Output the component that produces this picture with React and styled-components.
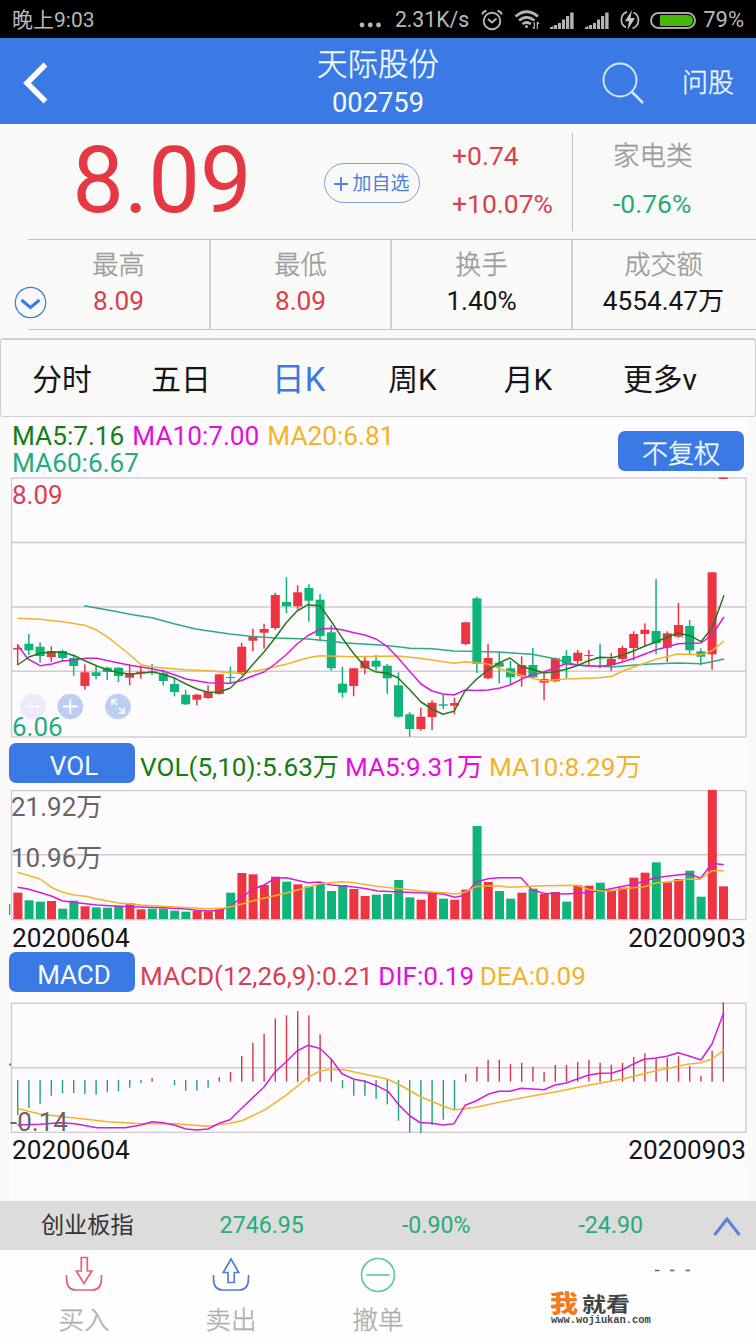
import React from "react";
import styled, { createGlobalStyle } from "styled-components";

const C = {
  blue: "#3b79e5",
  red: "#e53845",
  textRed: "#d8404f",
  green: "#0fb478",
  textGreen: "#26ac78",
  magenta: "#e010d8",
  lineMagenta: "#d21fd6",
  yellow: "#f0b429",
  darkGreen: "#118011",
  grey: "#9b9b9b",
  rule: "#c4c4c4",
};

const Global = createGlobalStyle`
  * { box-sizing: border-box; }
  body { margin: 0; background: #f9f9f7; font-family: Roboto, "Noto Sans CJK SC", sans-serif; }
  svg { display: block; }
`;

const Screen = styled.div`
  width: 756px;
  height: 1344px;
  overflow: hidden;
  display: flex;
  flex-direction: column;
  background: #f9f9f7;
`;

const Text = styled.span`
  display: block;
  white-space: pre;
  font-size: ${(p) => p.$size}px;
  line-height: ${(p) => p.$line || p.$size * 1.2}px;
  color: ${(p) => p.$color || "#151515"};
  font-weight: ${(p) => p.$weight || 400};
  -webkit-text-stroke: ${(p) => (p.$weight === 300 ? 0.4 : 0)}px currentColor;
`;

/* ---------- status bar ---------- */
const StatusBar = styled.div`
  height: 38px;
  flex: none;
  background: #000;
  display: flex;
  align-items: center;
  padding: 2px 12px 0 12px;
`;
const StatusIcons = styled.div`
  margin-left: auto;
  display: flex;
  align-items: center;
`;
const Glyph = styled.svg`
  margin-left: ${(p) => p.$gap || 0}px;
`;
const Battery = styled.div`
  width: 46px;
  height: 17px;
  margin: 0 7px 0 10px;
  border: 2px solid #a9a9a9;
  border-radius: 9px;
  padding: 1px 1px 1px 8px;
`;
const Charge = styled.div`
  height: 100%;
  background: #46b80a;
  border-radius: 0 6px 6px 0;
`;

/* ---------- header ---------- */
const Header = styled.header`
  height: 86px;
  flex: none;
  background: ${C.blue};
  display: grid;
  grid-template-columns: 200px 356px 200px;
  align-items: center;
  padding-top: 3px;
`;
const BackButton = styled.div`
  padding: 0 0 0 22px;
`;
const Titles = styled.div`
  display: flex;
  flex-direction: column;
  align-items: center;
`;
const HeaderActions = styled.div`
  display: flex;
  align-items: center;
  justify-content: flex-end;
  gap: 38px;
  padding-right: 22px;
`;

/* ---------- quote ---------- */
const Quote = styled.section`
  height: 115px;
  flex: none;
  display: grid;
  grid-template-columns: 324px 128px 120px 184px;
`;
const Price = styled.div`
  display: flex;
  align-items: center;
  justify-content: center;
  padding: 0 0 2px 0;
`;
const AddButton = styled.div`
  width: 96px;
  height: 40px;
  margin-top: 39px;
  padding-top: 1px;
  border: 1.5px solid #7ba0e6;
  border-radius: 20px;
  display: flex;
  align-items: center;
  justify-content: center;
  gap: 4px;
`;
const Change = styled.div`
  padding-top: 16px;
  display: flex;
  flex-direction: column;
  gap: 16px;
`;
const Sector = styled(Change)`
  margin: 9px 0 8px;
  height: 98px;
  padding: 7px 0 0 40px;
  border-left: 1px solid #bfbfbf;
`;

const Stats = styled.section`
  position: relative;
  height: 91px;
  flex: none;
  margin: 0 0 8px 28px;
  border-top: 1px solid ${C.rule};
  border-bottom: 1px solid ${C.rule};
  display: grid;
  grid-template-columns: 183px 181px 181px 181px;
`;
const Stat = styled.div`
  padding-top: 7px;
  text-align: center;
  border-right: ${(p) => (p.$last ? "none" : "2px solid #d0d0d0")};
`;
const Expander = styled.svg`
  position: absolute;
  left: -14px;
  top: 46px;
`;

/* ---------- tabs ---------- */
const Tabs = styled.nav`
  height: 79px;
  flex: none;
  border: 1px solid #cfcfcf;
  border-top-width: 2px;
  border-radius: 3px;
  display: grid;
  grid-template-columns: 122px 116px 119px 109px 122px 142px;
  align-items: center;
  text-align: center;
  padding-top: 3px;
`;

/* ---------- charts ---------- */
const Charts = styled.main`
  height: 784px;
  flex: none;
  margin: 0 8px 0 9px;
  background: #fefbff;
  display: flex;
  flex-direction: column;
`;
const MaLegend = styled.div`
  height: 60px;
  display: flex;
  justify-content: space-between;
  padding: 6px 4px 0 3px;
`;
const LegendLine = styled.div`
  display: flex;
  gap: ${(p) => p.$gap || 0}px;
  padding-top: ${(p) => p.$shift || 0}px;
`;
const Pill = styled.div`
  width: 126px;
  height: 40px;
  flex: none;
  margin-top: ${(p) => p.$top || 0}px;
  padding: 7px 0 0 ${(p) => p.$shift || 0}px;
  border-radius: 7px;
  background: ${C.blue};
  display: flex;
  align-items: center;
  justify-content: center;
`;
const IndicatorRow = styled.div`
  height: 40px;
  margin-bottom: ${(p) => p.$bottom}px;
  margin-top: ${(p) => p.$top || 0}px;
  display: flex;
  align-items: center;
  gap: 5px;
`;
const Plot = styled.div`
  position: relative;
  height: ${(p) => p.$height}px;
  flex: none;
`;
const PlotLabel = styled(Text)`
  position: absolute;
  left: ${(p) => p.$left}px;
  top: ${(p) => p.$top}px;
`;
const Dates = styled.div`
  height: 31px;
  display: flex;
  justify-content: space-between;
  align-items: center;
  padding: 5px 2px 0 3px;
`;

/* ---------- footer ---------- */
const IndexBar = styled.div`
  height: 49px;
  flex: none;
  background: #dcdcdc;
  display: grid;
  grid-template-columns: repeat(4, 174.5px) 58px;
  align-items: center;
  justify-items: center;
`;
const BottomNav = styled.footer`
  position: relative;
  flex: 1;
  background: #fefefe;
  display: grid;
  grid-template-columns: repeat(5, 147px);
  padding-left: 10.5px;
`;
const NavItem = styled.div`
  display: flex;
  flex-direction: column;
  align-items: center;
  padding-top: 5px;
  gap: 10px;
`;
const Watermark = styled.div`
  position: absolute;
  left: 550px;
  top: 42px;
`;
const WatermarkName = styled.div`
  display: flex;
  align-items: flex-end;
  gap: 4px;
  height: 25px;
  transform: scaleY(0.84);
`;
const WatermarkUrl = styled.div`
  font: bold 10.4px/10px "Liberation Mono", monospace;
  color: #444;
  padding-left: 1px;
  margin-top: -2px;
`;

/* ---------- data ---------- */
const X0 = 17.6;
const STEP = 11.2;
const xAt = (i) => X0 + STEP * i;

// colour, high, body top, body bottom, low
const candles = [
  ["r", 644, 648, 649.5, 665], ["g", 634, 643.7, 650.3, 655], ["g", 642.3, 646.7, 656, 662.7],
  ["r", 646.3, 651, 657, 662], ["g", 649.7, 651, 658, 661.3], ["g", 654.3, 658, 666, 675.7],
  ["r", 664.3, 672.3, 686, 689.7], ["g", 665.7, 672.3, 676, 679.3], ["g", 666.7, 667.7, 672, 680],
  ["g", 667.3, 667.7, 676, 682], ["r", 664.3, 673.7, 677.7, 685.3], ["r", 666, 671.7, 673, 678.7],
  ["g", 664, 671.3, 672.5, 675], ["g", 670, 673.3, 681, 685.3], ["g", 677.3, 684, 692, 696.3],
  ["g", 690, 694.7, 704.3, 705], ["r", 694, 694.7, 699.7, 705.3], ["r", 685.3, 692, 698, 698.7],
  ["r", 674, 674.3, 694, 694.7], ["g", 666.7, 677, 678, 683], ["r", 642.7, 646.7, 674, 675.3],
  ["r", 628.7, 636, 640.7, 651.3], ["r", 623.7, 629, 632.7, 648.7], ["r", 592.7, 595, 628, 629.7],
  ["g", 577.3, 602, 606.3, 613.3], ["r", 585.3, 592.3, 606.3, 609.3], ["g", 584.3, 588, 600.7, 621.7],
  ["g", 594, 599.7, 636, 641.3], ["g", 625, 632.3, 668.3, 670.7], ["g", 666.7, 683.7, 692.7, 697.7],
  ["r", 668, 668.3, 686, 696.3], ["r", 656.7, 660.7, 668.3, 674.3], ["g", 655, 660.7, 666.7, 670.7],
  ["g", 664, 665.7, 678.3, 694], ["g", 672.3, 685.3, 716.7, 717.7], ["g", 712, 714.3, 729, 736.7],
  ["r", 707.7, 716.7, 729, 730.7], ["r", 700.3, 702.7, 717, 730], ["g", 694, 704.3, 705.7, 709],
  ["r", 697.7, 703, 705.7, 714.3], ["r", 621.7, 622.3, 644, 645.3], ["g", 596.7, 598.3, 664, 673],
  ["r", 644, 658, 678.3, 679.3], ["g", 652, 662.7, 666.7, 683.3], ["g", 660.7, 668.3, 677.3, 684],
  ["r", 656.3, 665, 676.3, 686.7], ["g", 648, 665, 677.3, 678], ["r", 673.3, 679, 682.7, 700.3],
  ["r", 657.5, 658.3, 681.3, 682.3], ["g", 650, 656, 663.7, 678], ["r", 650, 652.7, 661, 666],
  ["r", 650, 655, 656, 666], ["g", 643.7, 657, 658.3, 668.3], ["r", 653, 659, 665, 671],
  ["r", 645.7, 648, 659, 660.7], ["r", 631.3, 634, 648, 660.3], ["r", 623.3, 629.7, 634, 646.7],
  ["g", 579, 631, 643.3, 654.3], ["r", 631.3, 633.3, 647.7, 662], ["r", 603, 625, 636.7, 637.7],
  ["g", 620, 626, 650.3, 654.3], ["g", 648.3, 651.3, 656.7, 665.3], ["r", 572.3, 572.3, 654.3, 669.7],
  ["r", 477.5, 477.5, 479, 479],
];

const klineLines = {
  ma60: "84,605.7 108,610 130,614.3 152,617.7 175,624 197,629.3 230,634 250,636.3 275,638 308,639 330,641 342,642.7 380,645 398,646.7 410,648.3 432,648.7 454,651 499,652 532,654.3 555,658.7 566,662 577,665 612,667 645,664.3 678,663 701,663.7 712,661.7 724,659",
  ma20: "17.5,618.3 40,619.3 62,621.7 85,625.3 97,630.3 108,637.3 119,646 130,655 141,664.7 152,667 186,669.7 208,670.7 230,672.7 242,673 250,672 264,669.3 286,664.3 308,657.7 320,655.7 354,656.7 398,656 420,658.3 454,663.3 465,661.7 488,664 500,668.7 512,672.7 532,678.3 544,680.7 566,679 600,677.7 612,676.3 623,671 634,667 645,663 656,659.3 678,654 701,654.7 712,650.7 724,641",
  ma5: "17.5,665 28.8,657 40,653.3 52,652 63,652.3 75,656 85,660.7 97,666 108,670 119,672.7 130,674 141,673.3 152,672 163,674 175,678.3 186,684 197,689 208,692.3 219,692 230,688.3 242,677 250,667.7 264,652 275,638 286,623 297,611 308,604.7 320,606 331,621 342,637.7 354,654 365,666.7 375,671.7 387,673.3 398,677.7 410,690 421,702 432,709 443,714.3 454,711.3 465,691 476,679.7 488,670 499,663 510,658 521,666.7 532,669.3 544,673 555,671.7 566,669.3 577,665.7 588,661 600,657.3 612,657.7 623,655 634,650.7 645,646 656,642 667,637.3 678,633 690,635.7 701,641.7 712,628 724,595.3",
  ma10: "17.5,645 28,659 40,665.7 52,664 62,661 75,660 85,658.3 97,658.3 108,660.7 119,663 130,665.3 152,668.7 163,671 175,675 186,679 208,682.7 230,683.3 241,680.7 250,677 264,672 275,664 286,655 297,644 308,635.5 320,629.3 331,628.3 342,629.7 354,632.7 365,635 376,639 387,646.3 398,657.7 410,671.7 421,684 432,691 443,694 454,695 465,690 476,690.5 488,690 500,688 510,685 521,679.3 532,675 544,672 555,667.7 566,663.7 577,665 588,666 600,666.3 612,665 623,661.7 634,658.3 645,654 656,649.7 667,647 678,643.7 690,643.3 701,643 712,635 724,617",
};

// bar height in thirds of a pixel above the base line
const volumeColors = "rggrggrgggrrggggrrrgrrrrgrggggrrgggg" + "rrgrrgrggrgrrgrrgrrrrgrrggrr";
const volumeHeights = [
  79, 56, 52, 54, 31, 55, 38, 35, 34, 40, 47, 29, 31, 31, 25, 22, 24, 23, 29, 79, 138, 134, 102, 127, 112, 104, 98, 105,
  84, 102, 90, 69, 73, 75, 117, 65, 58, 79, 61, 58, 88, 279, 111, 84, 61, 79, 91, 75, 81, 52, 101, 100, 109, 87, 94,
  124, 139, 170, 110, 120, 145, 67, 387, 98,
];
const volumeLines = {
  ma5: "17.5,887.3 28,889 40,892.5 52,896.3 62,900.7 75,902.5 97,905 119,906.3 141,907 163,907.7 186,909 197,910.3 208,911 219,910.5 230,906.7 242,897 253,889.3 264,885 275,878.3 286,877.7 297,880.3 308,882.7 320,882 331,885 342,885.7 354,887 365,888.5 378,891 400,892 432,893.3 443,894 455,897.3 465,895.3 476,882 488,878.7 499,877.7 521,877.7 532,890 544,893.3 566,894 588,892.5 608,889.3 618,887.3 634.7,884 644.7,881 655.7,877.7 667,876.3 689,873.7 700.7,878.3 712,863.3 723.7,864.7",
  ma10: "17.5,872.3 40,879 52,887.7 62,892 75,895.3 86,896.3 97,899 119,903 141,905 175,907 208,908.7 225,908 242,904 253,900.7 264,898.3 286,893 308,887.3 320,883.7 331,882.7 342,881.7 354,882.7 378,886.5 400,888.7 421,891 443,892.7 456,894 465,892.3 476,886.7 488,885.7 499,886 510,887.3 532,886.3 544,885.7 577,885.3 588,889.3 600,891 612,890.7 623,888.7 644,886.7 656,883 667,882 689,879 700,879.3 712,870.7 723.7,870.7",
};

// positive values rise above the zero line, negative fall below it
const macdBars = [
  -105, -84, -71, -47, -40, -39, -42, -44, -37, -34, -23, -10, 11, 0, -16, -33, -32, -23, 14, 29, 77, 117, 144, 190,
  199, 212, 199, 142, 70, -25, -47, -47, -57, -73, -122, -158, -159, -135, -119, -90, 23, 45, 66, 66, 53, 57, 45, 29,
  50, 50, 59, 66, 57, 51, 57, 74, 85, 69, 71, 76, 47, 18, 93, 238,
];
const macdLines = {
  dea: "17.5,1108.5 40,1114 70,1117.5 108,1121.7 141,1123.7 175,1123.7 208,1126.3 230,1123.3 242,1120.7 264,1110.3 286,1095.3 308,1077.3 320,1071 331,1069.3 345,1070 378,1077 388,1079.3 400,1085 421,1097 443,1106 454,1110 476,1107.3 499,1102.3 532,1096 555,1092 588,1085.3 623,1079 656,1070.7 689,1064 701,1062.7 712,1059 724,1050",
  dif: "17.5,1125 40,1124.3 60,1122.7 75,1123.7 97,1127.7 125,1127.7 141,1125 152,1121.7 163,1122.7 175,1125.3 186,1129 197,1130 208,1129 219,1123.3 230,1119.7 242,1108 264,1087 275,1072 286,1062 297,1051 308,1045.3 320,1048.5 331,1059 342,1073.7 354,1079.3 365,1081.3 378,1086.3 388,1091.3 399,1105 410,1116 420,1122.5 432,1123.3 443,1125 454,1123.7 465,1105.3 476,1101 488,1094.3 499,1091.3 510,1091.3 521,1088.3 544,1089.7 555,1085 566,1083 588,1075.3 600,1073.3 612,1073 622,1070 634,1063.7 644,1059.3 656,1058 667,1056.3 678,1052.7 689,1056 701,1060 712,1044 724,1012",
};

const tone = (c) => (c === "r" ? "#ed3542" : C.green);

const Line = ({ points, color }) => (
  <polyline points={points} fill="none" stroke={color} strokeWidth="1.5" strokeLinejoin="round" />
);

const Frame = ({ top, bottom, grid }) => (
  <g stroke="#cfcbd0" strokeWidth="1.4" fill="none">
    <rect x="11.5" y={top} width="734.5" height={bottom - top} />
    {grid.map((y) => (
      <line key={y} x1="11.5" x2="746" y1={y} y2={y} />
    ))}
  </g>
);

function KLine() {
  return (
    <svg width="739" height="261" viewBox="9 477 739 261">
      <Frame top={478} bottom={737} grid={[542.5, 607, 671.3]} />
      {candles.map(([c, high, top, bottom, low], i) => (
        <g key={i} fill={tone(c)}>
          <rect x={xAt(i) - 0.7} y={high} width="1.5" height={low - high} />
          <rect x={xAt(i) - 4.4} y={top} width="9" height={bottom - top} />
        </g>
      ))}
      <Line points={klineLines.ma60} color="#2fa982" />
      <Line points={klineLines.ma20} color={C.yellow} />
      <Line points={klineLines.ma10} color={C.lineMagenta} />
      <Line points={klineLines.ma5} color="#257a1c" />
      <g fill="none" stroke="#fff" strokeWidth="1.8">
        <circle cx="33" cy="706.5" r="12.8" fill="#eeeafb" stroke="none" />
        <path d="M27 706.5h12" />
        <circle cx="70.3" cy="706.5" r="12.8" fill="#bccff3" stroke="none" />
        <path d="M63 706.5h14.6M70.3 699.2v14.6" />
        <circle cx="118" cy="706.5" r="12.8" fill="#bccff3" stroke="none" />
        <path d="M112 705v-5h5M112 700l5 5M124 708v5h-5M124 713l-5-5" strokeWidth="1.6" />
      </g>
    </svg>
  );
}

function Volume() {
  return (
    <svg width="739" height="131" viewBox="9 790 739 131">
      <Frame top={790.5} bottom={919.5} grid={[854.7]} />
      {volumeHeights.map((h, i) => (
        <rect key={i} x={xAt(i) - 4.2} y={919 - h / 3} width="9" height={h / 3} fill={tone(volumeColors[i])} />
      ))}
      <Line points={volumeLines.ma5} color={C.lineMagenta} />
      <Line points={volumeLines.ma10} color={C.yellow} />
      <rect x="9" y="904" width="1.2" height="11" fill="#777" />
    </svg>
  );
}

function Macd() {
  return (
    <svg width="739" height="131" viewBox="9 1002 739 131">
      <Frame top={1003.3} bottom={1132.4} grid={[1067.7]} />
      {macdBars.map((v, i) => (
        <rect
          key={i}
          x={xAt(i) - 0.6}
          y={v > 0 ? 1081.7 - v / 3 : 1080}
          width="1.4"
          height={Math.abs(v) / 3}
          fill={v > 0 ? "#cf3a45" : "#20a478"}
        />
      ))}
      <Line points={macdLines.dea} color={C.yellow} />
      <Line points={macdLines.dif} color={C.lineMagenta} />
      <rect x="9" y="1063.5" width="2" height="2" fill="#777" />
    </svg>
  );
}

const Signal = ({ gap }) => (
  <Glyph $gap={gap} width="24" height="17" viewBox="0 0 24 17" fill="#b4b4b4">
    <path d="M0 17v-1.5l3.4-1.5v3zM4.1 13h3v4h-3zM8 11h3v6H8zM12 7.5h3v9.5h-3zM16 4h3.2v13H16zM20.2 0.5h3.4V17h-3.4z" />
  </Glyph>
);

const stats = [
  ["最高", "8.09", C.textRed],
  ["最低", "8.09", C.textRed],
  ["换手", "1.40%", "#151515"],
  ["成交额", "4554.47万", "#151515"],
];
const tabs = ["分时", "五日", "日K", "周K", "月K", "更多v"];
const index = [
  ["创业板指", "#333"],
  ["2746.95", C.textGreen],
  ["-0.90%", C.textGreen],
  ["-24.90", C.textGreen],
];
const LEGEND = 26.1;

export default function App() {
  return (
    <Screen>
      <Global />
      <StatusBar>
        <Text $size={21} $line={29} $color="#b8b8b8">晚上9:03</Text>
        <StatusIcons>
          <Glyph width="22" height="15" viewBox="0 0 22 15" fill="#b8b8b8">
            <circle cx="3" cy="12" r="2.4" />
            <circle cx="11.3" cy="12" r="2.4" />
            <circle cx="19.5" cy="12" r="2.4" />
          </Glyph>
          <Glyph width="14" height="1" />
          <Text $size={21.2} $color="#b8b8b8">2.31K/s</Text>
          <Glyph $gap={12} width="22" height="22" viewBox="0 0 22 22" fill="none" stroke="#b4b4b4" strokeWidth="1.9">
            <circle cx="11" cy="12" r="8.3" />
            <path d="M7 10l4 3.5 4.5-4M1.2 5.5Q2 2.5 5.5 1.8M20.8 5.5Q20 2.5 16.5 1.8" />
          </Glyph>
          <Glyph $gap={11} width="27" height="20" viewBox="0 0 27 20" fill="none" stroke="#b4b4b4" strokeWidth="2.7">
            <path d="M1.5 6.5Q12.5-3 24 6.5M5 10.5Q12.5 4 20.5 10.5M8.5 14Q12.5 11 17 14" />
            <circle cx="12.5" cy="16.5" r="1.5" fill="#b4b4b4" stroke="none" />
            <path d="M20.3 12v7M23.3 12v7M18.8 17l1.5 2M23.3 12l1.7 2" strokeWidth="1.2" />
          </Glyph>
          <Signal gap={9} />
          <Signal gap={11} />
          <Glyph $gap={11} width="20" height="20" viewBox="0 0 20 20" fill="none" stroke="#b4b4b4" strokeWidth="1.8">
            <path d="M7 1.8a8.5 8.5 0 0 0-1 15.6M13.5 2.5a8.5 8.5 0 0 1-1 15.8" />
            <path d="M12 0L5 11.3h4L7.5 20l7.5-12h-4.5z" fill="#c4c4c4" stroke="none" />
          </Glyph>
          <Battery>
            <Charge />
          </Battery>
          <Text $size={22} $color="#b8b8b8">79%</Text>
        </StatusIcons>
      </StatusBar>

      <Header>
        <BackButton>
          <svg width="28" height="42" viewBox="0 0 28 42" fill="none" stroke="#fff" strokeWidth="5.5">
            <path d="M23.5 2.5L5 21l18.5 18.5" />
          </svg>
        </BackButton>
        <Titles>
          <Text $size={30.5} $line={42} $color="#f4fcff" $weight={300}>天际股份</Text>
          <Text $size={27.3} $line={35} $color="#f4fcff">002759</Text>
        </Titles>
        <HeaderActions>
          <svg width="42" height="42" viewBox="0 0 42 42" fill="none" stroke="#d5eaff" strokeWidth="1.9">
            <circle cx="18" cy="18" r="16.5" />
            <path d="M29.5 29.5L41 41" strokeWidth="2.5" />
          </svg>
          <Text $size={26} $line={36} $color="#eef8ff" $weight={300}>问股</Text>
        </HeaderActions>
      </Header>

      <Quote>
        <Price>
          <Text $size={92} $line={110} $color={C.red}>8.09</Text>
        </Price>
        <AddButton>
          <svg width="14" height="14" viewBox="0 0 14 14" stroke="#4f80dc" strokeWidth="1.8">
            <path d="M0 7h14M7 0v14" />
          </svg>
          <Text $size={19} $line={26} $color="#4f80dc">加自选</Text>
        </AddButton>
        <Change>
          <Text $size={26.5} $line={32} $color={C.textRed}>+0.74</Text>
          <Text $size={26.5} $line={32} $color={C.textRed}>+10.07%</Text>
        </Change>
        <Sector>
          <Text $size={26.5} $line={32} $color={C.grey} $weight={300}>家电类</Text>
          <Text $size={26.5} $line={32} $color={C.textGreen}>-0.76%</Text>
        </Sector>
      </Quote>

      <Stats>
        {stats.map(([label, value, color], i) => (
          <Stat key={label} $last={i === 3}>
            <Text $size={26.2} $line={36} $color={C.grey} $weight={300}>{label}</Text>
            <Text $size={26.2} $line={36} $color={color}>{value}</Text>
          </Stat>
        ))}
        <Expander width="33" height="33" viewBox="0 0 33 33" fill="none" stroke={C.blue}>
          <circle cx="16.5" cy="16.5" r="15.2" strokeWidth="1.2" />
          <path d="M7.5 14l9 7.5 9-7.5" strokeWidth="3" />
        </Expander>
      </Stats>

      <Tabs>
        {tabs.map((t) => {
          const active = t === "日K";
          return (
            <Text key={t} $size={active ? 33 : 29.8} $line={38} $color={active ? C.blue : "#151515"}>{t}</Text>
          );
        })}
      </Tabs>

      <Charts>
        <MaLegend>
          <div>
            <LegendLine $gap={8}>
              <Text $size={26.2} $line={26.5} $color={C.darkGreen}>MA5:7.16</Text>
              <Text $size={26.2} $line={26.5} $color={C.magenta}>MA10:7.00</Text>
              <Text $size={26.2} $line={26.5} $color={C.yellow}>MA20:6.81</Text>
            </LegendLine>
            <Text $size={26.2} $line={26.5} $color={C.textGreen}>MA60:6.67</Text>
          </div>
          <Pill $top={8}>
            <Text $size={26} $color="#f4fcff" $weight={300}>不复权</Text>
          </Pill>
        </MaLegend>
        <Plot $height={261}>
          <KLine />
          <PlotLabel $size={26} $line={26} $left={3} $top={5} $color={C.textRed}>8.09</PlotLabel>
          <PlotLabel $size={26} $left={3} $top={235} $color={C.textGreen}>6.06</PlotLabel>
        </Plot>
        <IndicatorRow $top={5} $bottom={7}>
          <Pill $shift={4}>
            <Text $size={26} $color="#f4fcff">VOL</Text>
          </Pill>
          <LegendLine $gap={6} $shift={10}>
            <Text $size={LEGEND} $color={C.darkGreen}>VOL(5,10):5.63万</Text>
            <Text $size={LEGEND} $color={C.magenta}>MA5:9.31万</Text>
            <Text $size={LEGEND} $color={C.yellow}>MA10:8.29万</Text>
          </LegendLine>
        </IndicatorRow>
        <Plot $height={131}>
          <Volume />
          <PlotLabel $size={26} $left={2} $top={2} $color="#666">21.92万</PlotLabel>
          <PlotLabel $size={26} $left={2} $top={53} $color="#666">10.96万</PlotLabel>
        </Plot>
        <Dates>
          <Text $size={26.2}>20200604</Text>
          <Text $size={26.2}>20200903</Text>
        </Dates>
        <IndicatorRow $bottom={10}>
          <Pill $shift={4}>
            <Text $size={26} $color="#f4fcff">MACD</Text>
          </Pill>
          <LegendLine $gap={5.5} $shift={10}>
            <Text $size={LEGEND} $color={C.textRed}>MACD(12,26,9):0.21</Text>
            <Text $size={LEGEND} $color={C.magenta}>DIF:0.19</Text>
            <Text $size={LEGEND} $color={C.yellow}>DEA:0.09</Text>
          </LegendLine>
        </IndicatorRow>
        <Plot $height={131}>
          <Macd />
          <PlotLabel $size={26} $left={1} $top={105} $color="#666">-0.14</PlotLabel>
        </Plot>
        <Dates>
          <Text $size={26.2}>20200604</Text>
          <Text $size={26.2}>20200903</Text>
        </Dates>
      </Charts>

      <IndexBar>
        {index.map(([t, color]) => (
          <Text key={t} $size={23.2} $color={color}>{t}</Text>
        ))}
        <svg width="28" height="20" viewBox="0 0 28 20" fill="none" stroke="#5783db" strokeWidth="3">
          <path d="M1.5 19L14 3l12.5 16" />
        </svg>
      </IndexBar>

      <BottomNav>
        <NavItem>
          <svg width="38" height="38" viewBox="0 0 38 38" fill="none" stroke="#e8616c" strokeWidth="1.7">
            <path d="M16.3 2.5h6V16h4.5L19 28.5 11.3 16h5zM1.5 20v3q0 12 9 12h17q9 0 9-12v-3" />
          </svg>
          <Text $size={25.5} $line={34} $color="#b0b0b0" $weight={300}>买入</Text>
        </NavItem>
        <NavItem>
          <svg width="38" height="38" viewBox="0 0 38 38" fill="none" stroke="#4f80d4" strokeWidth="1.7">
            <path d="M16 27.5h6.3V17.5h4.5L19 4 11.3 17.5H16zM1.5 20v3q0 12 9 12h17q9 0 9-12v-3" />
          </svg>
          <Text $size={25.5} $line={34} $color="#b0b0b0" $weight={300}>卖出</Text>
        </NavItem>
        <NavItem>
          <svg width="38" height="38" viewBox="0 0 38 38" fill="none" stroke="#5cc6a0" strokeWidth="1.6">
            <circle cx="19" cy="20" r="16.5" />
            <path d="M7.5 20h23" />
          </svg>
          <Text $size={25.5} $line={34} $color="#b0b0b0" $weight={300}>撤单</Text>
        </NavItem>
        <NavItem />
        <NavItem>
          <svg width="38" height="38" viewBox="0 0 38 38" stroke="#666" strokeWidth="1.5">
            <path d="M2 15.5h4.5M17 15.5h4.5M32.5 15.5h4.5" />
          </svg>
        </NavItem>
        <Watermark>
          <WatermarkName>
            <Text $size={28} $line={25} $weight={900} $color="#f47a20">我</Text>
            <Text $size={24} $line={23} $weight={700} $color="#444">就看</Text>
          </WatermarkName>
          <WatermarkUrl>www.wojiukan.com</WatermarkUrl>
        </Watermark>
      </BottomNav>
    </Screen>
  );
}
